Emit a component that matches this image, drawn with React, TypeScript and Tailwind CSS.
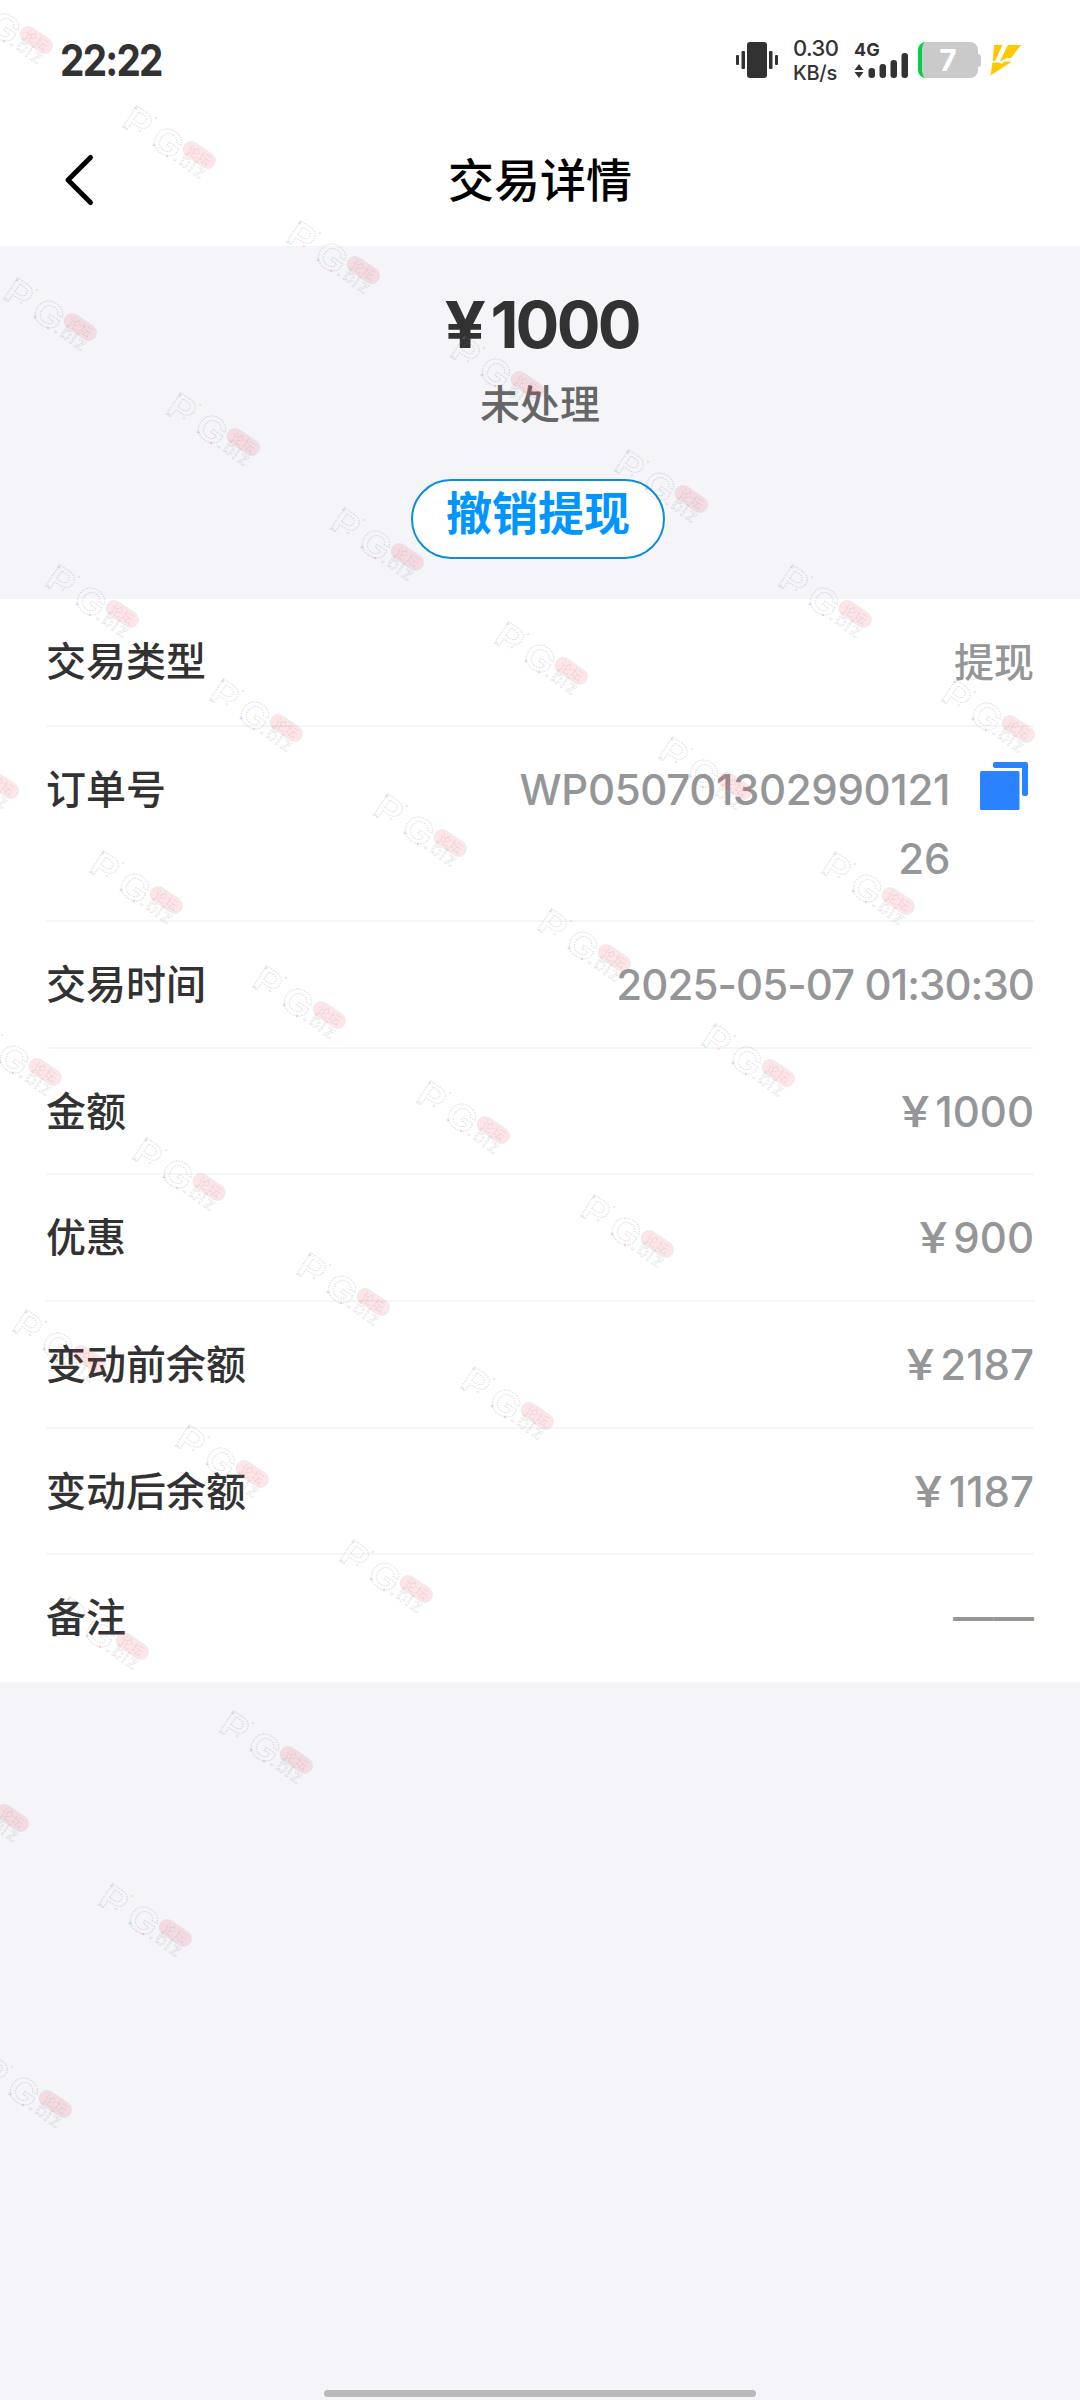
import type { ReactNode } from "react";

interface DetailRow {
  label: string;
  value: ReactNode;
}

/** Right/bottom corner of the red pill of every watermark stamp. */
const STAMPS: [number, number][] = [
  [52, 53], [215, 168], [379, 283], [543, 398], [707, 512], [871, 627], [1034, 742],
  [96, 340], [259, 455], [423, 570], [587, 684], [751, 799], [914, 914],
  [138, 627], [302, 741], [466, 856], [630, 971], [794, 1086],
  [18, 798], [182, 913], [345, 1028], [509, 1143], [673, 1257],
  [61, 1085], [225, 1200], [389, 1315], [553, 1429],
  [105, 1372], [268, 1487], [432, 1602],
  [148, 1659], [312, 1773],
  [28, 1831], [191, 1946], [71, 2117],
];

const ROWS: DetailRow[] = [
  {
    label: "交易类型",
    value: <span className="text-[40px]">提现</span>,
  },
  {
    label: "订单号",
    value: (
      <div className="flex items-start gap-[30px] pr-1.5">
        <span className="w-[440px] text-right tracking-[-0.35px] break-all">
          WP05070130299012126
        </span>
        <CopyIcon />
      </div>
    ),
  },
  {
    label: "交易时间",
    value: <span className="tracking-[-0.92px]">2025-05-07 01:30:30</span>,
  },
  { label: "金额", value: <Money amount="1000" /> },
  { label: "优惠", value: <Money amount="900" /> },
  { label: "变动前余额", value: <Money amount="2187" /> },
  { label: "变动后余额", value: <Money amount="1187" /> },
  {
    label: "备注",
    value: (
      <span className="block h-[69px] font-['Liberation_Sans',sans-serif] text-[40.5px] leading-[66px] font-bold">
        ——
      </span>
    ),
  },
];

export default function App() {
  return (
    <div className="relative flex h-[2400px] w-[1080px] flex-col overflow-hidden bg-[#f4f4f9] font-['Inter','Noto_Sans_CJK_SC',sans-serif] text-[#323232]">
      <header className="h-[246px] bg-white">
        <StatusBar />
        <div className="grid h-[120px] grid-cols-[160px_1fr_160px] items-center">
          <button type="button" aria-label="返回" className="pl-[62px]">
            <svg width="34" height="56" viewBox="0 0 34 56" fill="none">
              <path
                d="M28.5 5.5 6 28l22.5 22.5"
                stroke="#000"
                strokeWidth="5"
                strokeLinecap="round"
                strokeLinejoin="round"
              />
            </svg>
          </button>
          <h1 className="text-center text-[46px] leading-none font-medium text-black">
            交易详情
          </h1>
        </div>
      </header>

      <section className="flex h-[353px] flex-col items-center">
        <p className="mt-[46px] ml-2 flex h-[64px] items-center gap-1 text-[65px] leading-none font-bold">
          <span className="origin-right scale-x-[1.12]">¥</span>
          <span className="tracking-[-2.8px]">1000</span>
        </p>
        <p className="mt-[29px] text-[40px] leading-[40px] font-medium text-[#666]">未处理</p>
        <button
          type="button"
          className="mt-[54px] mr-1 h-20 w-[254px] rounded-full border-2 border-[#0a8fd6] bg-white pb-3 text-[46px] leading-none font-bold text-[#0095ff]"
        >
          撤销提现
        </button>
      </section>

      <section className="bg-white px-[46px]">
        {ROWS.map((row) => (
          <div
            key={row.label}
            className="flex justify-between border-b-2 border-[#f5f6f7] pt-7 pb-[27.6px] text-[42px] leading-[69px] font-medium last:border-white"
          >
            <span className="text-[40px]">{row.label}</span>
            <div className="text-[#949698]">{row.value}</div>
          </div>
        ))}
      </section>

      <div className="mx-auto mt-auto mb-[3px] h-[7px] w-[432px] rounded-full bg-[#b9b9bb]" />
      <Watermark />
    </div>
  );
}

function Money({ amount }: { amount: string }) {
  return (
    <span className="flex gap-1.5">
      <span className="origin-right scale-x-[1.2]">¥</span>
      <span>{amount}</span>
    </span>
  );
}

function StatusBar() {
  return (
    <div className="flex h-[120px] items-center justify-between pr-[59px] pl-[60px]">
      <span className="origin-left scale-x-[0.88] text-[44px] leading-none font-bold tracking-[-2px]">
        22:22
      </span>
      <div className="flex items-center">
        <svg width="42" height="36" viewBox="0 0 42 36" fill="#323232">
          <rect x="11" width="20" height="36" rx="3" />
          <rect x="5.5" y="9" width="3.5" height="18" rx="1" />
          <rect y="13" width="3" height="10" rx="1" />
          <rect x="33" y="9" width="3.5" height="18" rx="1" />
          <rect x="39" y="13" width="3" height="10" rx="1" />
        </svg>
        <div className="ml-[15px] w-[46px] pt-[2px] text-[22px] leading-[25px] font-medium whitespace-nowrap">
          <div className="tracking-[-0.6px]">0.30</div>
          <div className="text-[20px] tracking-[-0.3px]">KB/s</div>
        </div>
        <div className="ml-[15px] flex h-[36px] w-[54px] flex-col">
          <span className="h-[12px] text-[18px] leading-[15px] font-bold">4G</span>
          <svg className="-mt-px" width="54" height="25" viewBox="0 0 54 25" fill="#323232">
            <path d="M.5 17 5 11l4.5 6zM.5 19h9L5 25z" />
            <rect x="14.5" y="15" width="6.5" height="10" rx="3" />
            <rect x="25.5" y="11" width="6.5" height="14" rx="3" />
            <rect x="36.5" y="7" width="6.5" height="18" rx="3" />
            <rect x="47.5" y="0" width="6.5" height="25" rx="3" />
          </svg>
        </div>
        <div className="ml-[10px] flex items-center">
          <div className="h-9 w-[60px] overflow-hidden rounded-[8px] border-l-[4px] border-[#00d140] bg-[#cacaca] pr-1 text-center text-[30px] leading-[36px] font-bold text-white">
            7
          </div>
          <div className="h-[13px] w-[3px] rounded-r-sm bg-[#cacaca]" />
        </div>
        <svg className="ml-2" width="32" height="32" viewBox="0 0 32 32" fill="#ffc800">
          <path d="M5 1h8.500L6 17H3.800z" />
          <path d="M19 1h13L22 14h-4l-6 3h-1z" />
          <path d="M3.500 18.500H10l2.500 1.500 3-2.500H23L1.500 31.500z" />
        </svg>
      </div>
    </div>
  );
}

function CopyIcon() {
  return (
    <svg className="mt-[7px] shrink-0" width="48" height="48" viewBox="0 0 48 48" fill="#2a82ff">
      <rect y="9" width="39.5" height="39" rx="1.5" />
      <path d="M15 0h31a2 2 0 0 1 2 2v30a2 2 0 0 1-2 2h-2a2 2 0 0 1-2-2V6H15a2 2 0 0 1-2-2V2a2 2 0 0 1 2-2z" />
    </svg>
  );
}

/** Faint forum stamps laid over the whole screen. */
function Watermark() {
  return (
    <svg
      className="pointer-events-none absolute inset-0"
      width="1080"
      height="2400"
      viewBox="0 0 1080 2400"
      aria-hidden="true"
    >
      {STAMPS.map(([x, y]) => (
        <g key={`${x}-${y}`} transform={`translate(${x} ${y})`}>
          <g transform="translate(-94 -42) rotate(34) scale(1.16 1)">
            <text
              x="-1 28"
              fontSize="35"
              fontWeight="600"
              fill="none"
              stroke="#80808c"
              strokeOpacity="0.27"
              strokeWidth="1"
              strokeDasharray="1.5 1"
            >
              PG
            </text>
          </g>
          <circle cx="-79" cy="-60" r="1.5" fill="#8f7dff" fillOpacity="0.2" />
          <circle cx="-59" cy="-50" r="1.3" fill="#ff9a5c" fillOpacity="0.25" />
          <circle cx="-75" cy="-37" r="1.3" fill="#f36cff" fillOpacity="0.2" />
          <circle cx="-90" cy="-41" r="1.3" fill="#4fd8e8" fillOpacity="0.25" />
          <circle cx="-61" cy="-23" r="1.5" fill="#4f9cff" fillOpacity="0.25" />
          <circle cx="-48" cy="-12" r="1.3" fill="#ff5c6c" fillOpacity="0.25" />
          <g transform="translate(-15.7 -13) rotate(34)">
            <rect
              x="-18"
              y="-8"
              width="36"
              height="16"
              rx="8"
              fill="#ff2a3c"
              fillOpacity="0.12"
              stroke="#5fe0e0"
              strokeOpacity="0.12"
            />
            <text y="5" textAnchor="middle" fontSize="13" fill="#6c8078" fillOpacity="0.16">
              论坛
            </text>
          </g>
          <g transform="translate(-43 -9) rotate(36)">
            <text
              x="0 7 19 25"
              fontSize="18"
              fill="none"
              stroke="#777"
              strokeOpacity="0.2"
              strokeWidth="0.9"
              strokeDasharray="3 1"
            >
              .biz
            </text>
          </g>
        </g>
      ))}
    </svg>
  );
}
